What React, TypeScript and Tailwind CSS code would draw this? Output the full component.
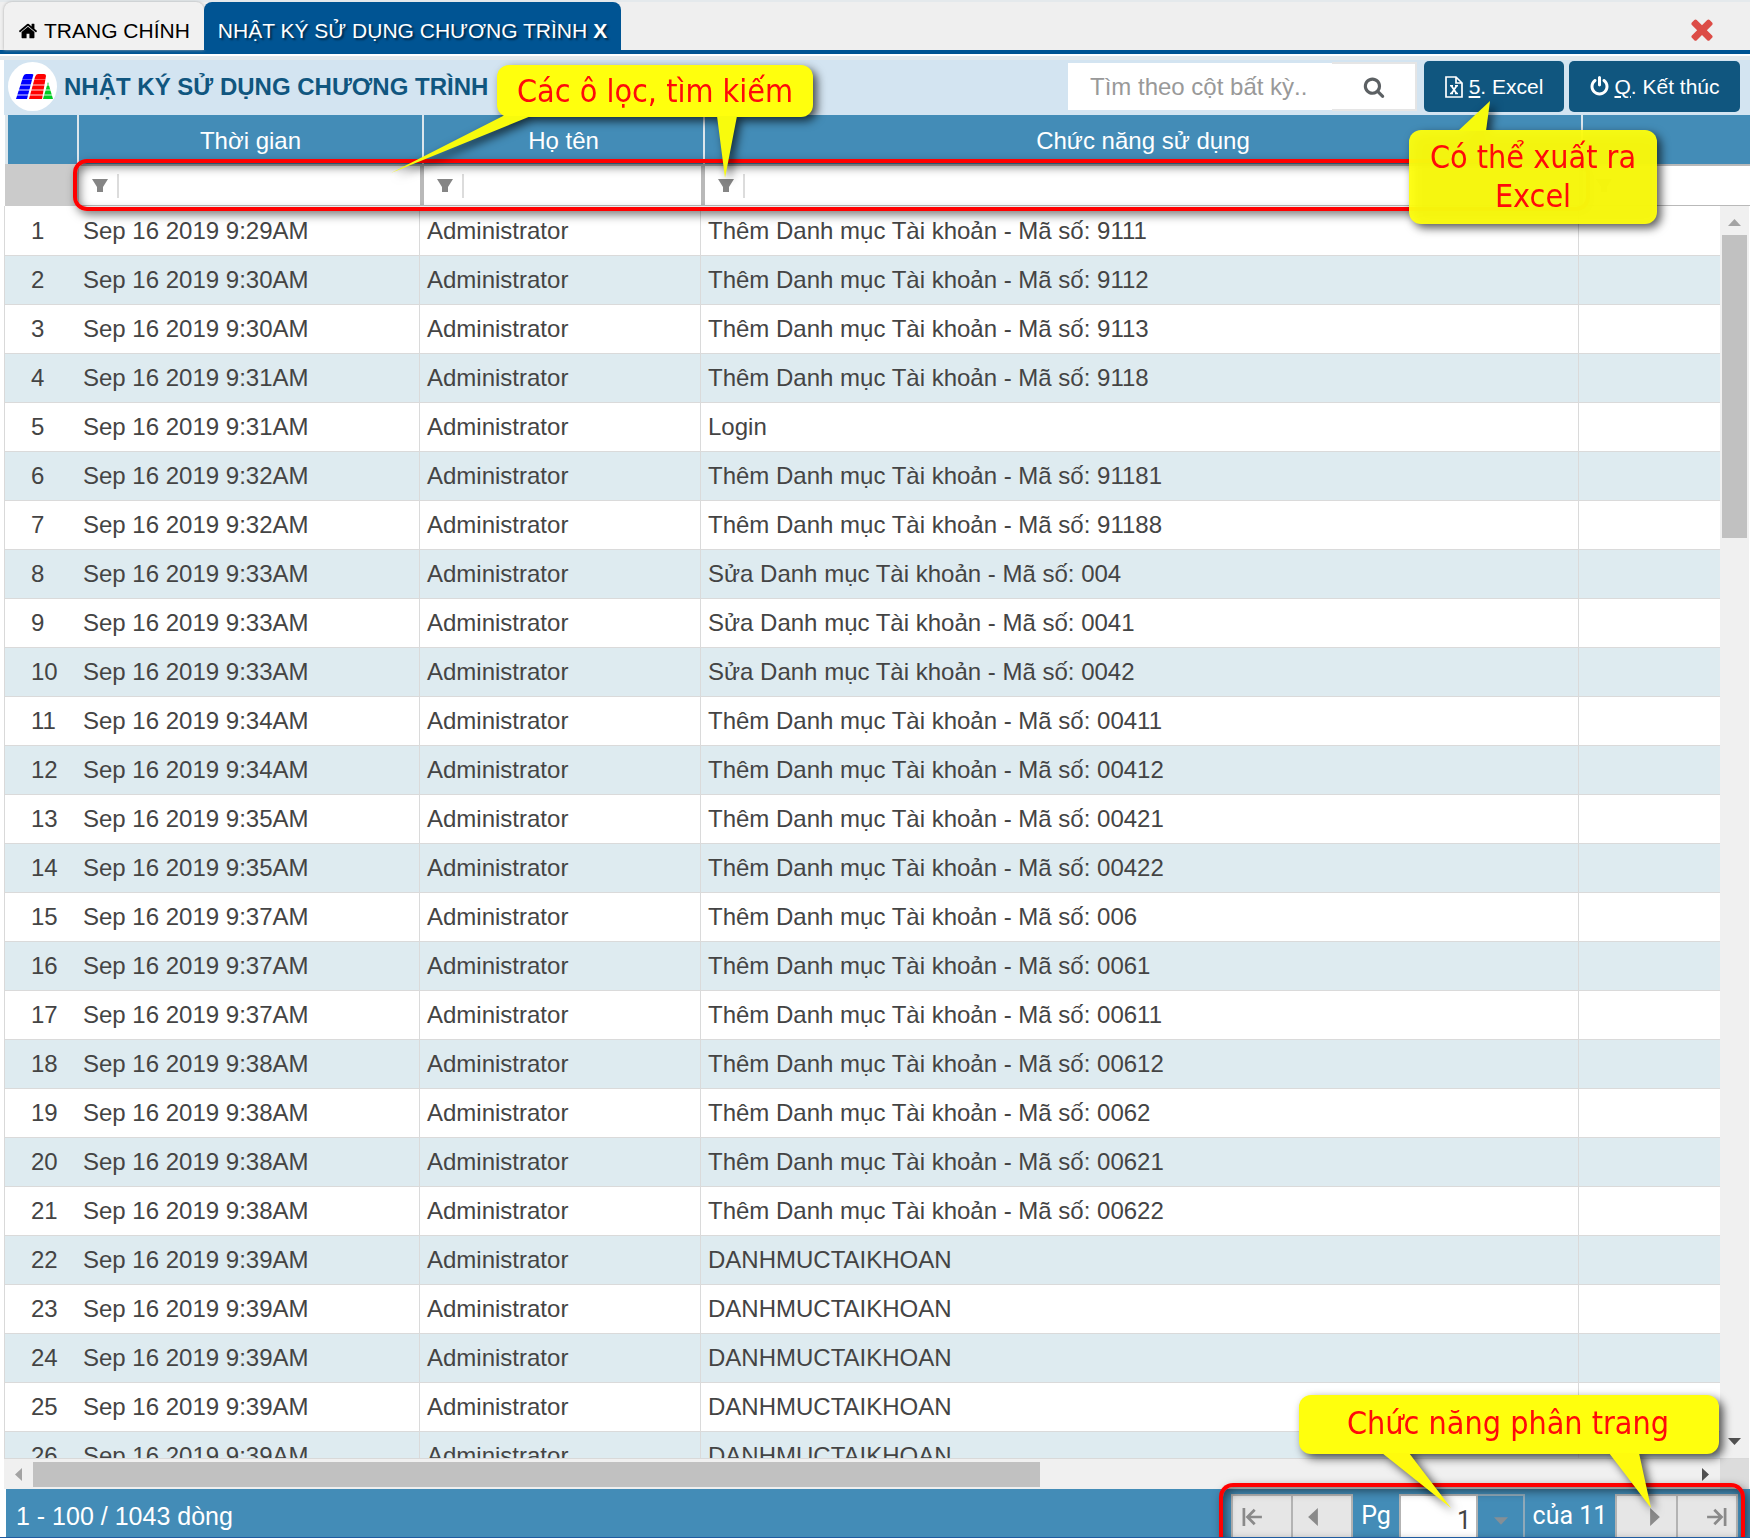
import { useState } from 'react';

type Log = {
    thoiGian: string;
    hoTen: string;
    chucNang: string;
};

const them = (ma: string) => `Thêm Danh mục Tài khoản - Mã số: ${ma}`;
const sua = (ma: string) => `Sửa Danh mục Tài khoản - Mã số: ${ma}`;

const entries: [string, string][] = [
    ['9:29AM', them('9111')],
    ['9:30AM', them('9112')],
    ['9:30AM', them('9113')],
    ['9:31AM', them('9118')],
    ['9:31AM', 'Login'],
    ['9:32AM', them('91181')],
    ['9:32AM', them('91188')],
    ['9:33AM', sua('004')],
    ['9:33AM', sua('0041')],
    ['9:33AM', sua('0042')],
    ['9:34AM', them('00411')],
    ['9:34AM', them('00412')],
    ['9:35AM', them('00421')],
    ['9:35AM', them('00422')],
    ['9:37AM', them('006')],
    ['9:37AM', them('0061')],
    ['9:37AM', them('00611')],
    ['9:38AM', them('00612')],
    ['9:38AM', them('0062')],
    ['9:38AM', them('00621')],
    ['9:38AM', them('00622')],
    ['9:39AM', 'DANHMUCTAIKHOAN'],
    ['9:39AM', 'DANHMUCTAIKHOAN'],
    ['9:39AM', 'DANHMUCTAIKHOAN'],
    ['9:39AM', 'DANHMUCTAIKHOAN'],
    ['9:39AM', 'DANHMUCTAIKHOAN'],
];

const logs: Log[] = entries.map(([gio, chucNang]) => ({
    thoiGian: `Sep 16 2019 ${gio}`,
    hoTen: 'Administrator',
    chucNang,
}));

const columns = ['Thời gian', 'Họ tên', 'Chức năng sử dụng', ''];

const icons = {
    home: 'M1472 992v480q0 26-19 45t-45 19h-384v-384h-256v384h-384q-26 0-45-19t-19-45v-480q0-1 .5-3t.5-3l575-474 575 474q1 2 1 6zm223-69l-62 74q-8 9-21 11h-3q-13 0-21-7l-692-577-692 577q-12 8-24 7-13-2-21-11l-62-74q-8-10-7-23.5t11-21.5l719-599q32-26 76-26t76 26l244 204v-195q0-14 9-23t23-9h192q14 0 23 9t9 23v408l219 182q10 8 11 21.5t-7 23.5z',
    times: 'M1490 1322q0 40-28 68l-136 136q-28 28-68 28t-68-28l-294-294-294 294q-28 28-68 28t-68-28l-136-136q-28-28-28-68t28-68l294-294-294-294q-28-28-28-68t28-68l136-136q28-28 68-28t68 28l294 294 294-294q28-28 68-28t68 28l136 136q28 28 28 68t-28 68l-294 294 294 294q28 28 28 68z',
    power: 'M1664 896q0 156-61 298t-164 245-245 164-298 61-298-61-245-164-164-245-61-298q0-182 80.5-343t226.5-270q43-32 95.5-25t83.5 50q32 42 24.5 94.5t-49.5 84.5q-98 74-151.5 181t-53.5 228q0 104 40.5 198.5t109.5 163.5 163.5 109.5 198.5 40.5 198.5-40.5 163.5-109.5 109.5-163.5 40.5-198.5q0-121-53.5-228t-151.5-181q-42-32-49.5-84.5t24.5-94.5q31-43 84-50t95 25q146 109 226.5 270t80.5 343zm-640-768v640q0 52-38 90t-90 38-90-38-38-90v-640q0-52 38-90t90-38 90 38 38 90z',
    search: 'M1216 832q0-185-131.5-316.5t-316.5-131.5-316.5 131.5-131.5 316.5 131.5 316.5 316.5 131.5 316.5-131.5 131.5-316.5zm512 832q0 52-38 90t-90 38q-54 0-90-38l-343-342q-179 124-399 124-143 0-273.5-55.5t-225-150-150-225-55.5-273.5 55.5-273.5 150-225 225-150 273.5-55.5 273.5 55.5 225 150 150 225 55.5 273.5q0 220-124 399l343 343q37 37 37 90z',
};

function Icon({ name, className }: { name: keyof typeof icons; className: string }) {
    return (
        <svg viewBox="0 0 1792 1792" fill="currentColor" className={className} aria-hidden="true">
            <path d={icons[name]} />
        </svg>
    );
}

function Logo() {
    return (
        <svg viewBox="0 0 49 49" className="h-[49px] w-[49px] shrink-0" aria-hidden="true">
            <circle cx="24.5" cy="24.5" r="24.5" fill="#fff" />
            <path d="M18 12h6q2 0 1 2l-6 23H8l7-22q1-3 3-3z" fill="#00f" />
            <path d="M30 12h6q2 0 2 2l-4 23H21l6-22q1-3 3-3z" fill="#f00" />
            <path d="M40 20l5 17H35z" fill="#0c2" />
            <path d="M14 17.500h28" stroke="#fff" strokeOpacity=".35" />
            <path d="M11 23h32M9 28h35M7 33h38" stroke="#fff" strokeOpacity=".85" strokeWidth="1.200" />
        </svg>
    );
}

function ExcelIcon() {
    return (
        <svg viewBox="0 0 18 22" className="h-[22px] w-[18px]" fill="none" stroke="currentColor" aria-hidden="true">
            <path d="M1 1h10l6 6v14H1zM11 1v6h6" strokeWidth="1.700" />
            <path d="M6.500 10l5 7.500M11.500 10l-5 7.500" strokeWidth="1.800" />
            <path d="M5 9.800h3M10 9.800h3M5 17.500h3M10 17.500h3" strokeWidth="1.400" />
        </svg>
    );
}

function FilterCell({ label }: { label: string }) {
    return (
        <div className="flex h-full items-center bg-white pl-[13px]">
            <svg viewBox="0 0 16 13" className="h-[13px] w-4 shrink-0" fill="#858585" aria-hidden="true">
                <path d="M0 0h16l-5 8v5H5V8z" />
            </svg>
            <input aria-label={`Lọc ${label}`} className="ml-[9px] h-6 w-full min-w-0 border-l-2 border-[#dcdcdc] bg-transparent px-2 text-2xl outline-none" />
        </div>
    );
}

const arrows = {
    up: 'M0 7L6.500 0 13 7z',
    down: 'M0 0h13L6.500 7z',
    left: 'M7 0v13L0 6.500z',
    right: 'M0 0v13L7 6.500z',
};

function Arrow({ dir, className }: { dir: keyof typeof arrows; className: string }) {
    const box = dir === 'up' || dir === 'down' ? '0 0 13 7' : '0 0 7 13';
    return (
        <svg viewBox={box} fill="currentColor" className={className} aria-hidden="true">
            <path d={arrows[dir]} />
        </svg>
    );
}

const balloonText = "font-['DejaVu_Sans_Condensed','DejaVu_Sans',sans-serif] text-[32px] text-[#ff0a0a]";

export default function App() {
    const [page, setPage] = useState('1');
    const [search, setSearch] = useState('');

    return (
        <div className="flex h-screen flex-col overflow-hidden border-b border-[#1f5ba0] bg-white font-['Liberation_Sans',Arial,sans-serif]">
            <nav className="flex h-[54px] shrink-0 items-end border-b-4 border-t-2 border-b-[#005493] border-t-[#e4e9ec] bg-[#efefef] pl-1">
                <a href="#home" className="flex h-full items-center gap-[6px] rounded-t-lg bg-[#f1f1f1] px-[14px] pt-[10px] text-[21px] leading-6 text-black shadow-[0_0_3px_#aaa]">
                    <Icon name="home" className="h-5 w-5" />
                    TRANG CHÍNH
                </a>
                <a href="#log" className="flex h-full items-center gap-[6px] rounded-t-lg bg-[#005493] px-[14px] pt-[10px] text-[21px] leading-6 text-white [text-shadow:2px_2px_2px_#00000080]">
                    NHẬT KÝ SỬ DỤNG CHƯƠNG TRÌNH
                    <b>X</b>
                </a>
                <button aria-label="Đóng" className="ml-auto mr-8 self-center pt-[6px] text-[#dc4c46]">
                    <Icon name="times" className="h-8 w-8" />
                </button>
            </nav>

            <div className="mt-[2px] flex min-h-0 flex-1 flex-col border-t-4 border-[#e4e9ec] pl-1">
                <header className="relative flex h-[55px] shrink-0 items-center bg-[#d3e4f1] pb-[2px] pl-1 pr-[10px]">
                    <Logo />
                    <h1 className="ml-[7px] text-2xl font-bold text-[#10567f]">NHẬT KÝ SỬ DỤNG CHƯƠNG TRÌNH</h1>

                    <div className="ml-auto flex h-[47px] items-center">
                        <input
                            aria-label="Tìm kiếm"
                            placeholder="Tìm theo cột bất kỳ.."
                            value={search}
                            onChange={(e) => setSearch(e.target.value)}
                            className="h-[47px] w-[264px] bg-white px-[22px] text-2xl text-[#555] outline-none placeholder:text-[#999]"
                        />
                        <button aria-label="Tìm" className="flex h-[49px] w-[85px] items-center justify-center border-y-2 border-r-2 border-[#e5e5e5] bg-white text-[#5c6063]">
                            <Icon name="search" className="h-[22px] w-[22px]" />
                        </button>
                    </div>

                    <div className="relative ml-[7px]">
                        <button className="flex h-[51px] w-[140px] items-center justify-center gap-[6px] rounded-[5px] bg-[#10567f] text-[21px] text-white">
                            <ExcelIcon />
                            <span><u>5</u>. Excel</span>
                        </button>
                        <div className={`absolute left-[-15px] top-[69px] z-30 w-[248px] rounded-xl bg-[#ffff0d]/95 px-3 py-2 text-center leading-[39px] drop-shadow-[4px_4px_5px_#000000b0] ${balloonText}`}>
                            <svg viewBox="0 0 90 30" className="absolute left-0 top-[-29px] h-[30px] w-[90px]" aria-hidden="true">
                                <path d="M49 30L81 0 77 30z" fill="#f6fb0d" />
                            </svg>
                            Có thể xuất ra Excel
                        </div>
                    </div>
                    <button className="ml-[5px] flex h-[51px] w-[171px] items-center justify-center gap-1 rounded-[5px] bg-[#10567f] text-[21px] text-white">
                        <Icon name="power" className="h-[21px] w-[21px]" />
                        <span><u>Q</u>. Kết thúc</span>
                    </button>

                    <div className={`absolute left-[493px] top-[5px] z-30 flex h-[52px] w-[316px] items-center justify-center rounded-xl bg-[#ffff0d] drop-shadow-[4px_4px_5px_#000000b0] ${balloonText}`}>
                        <svg viewBox="0 0 350 64" className="absolute left-[-106px] top-[51px] h-16 w-[350px]" aria-hidden="true">
                            <path d="M112 0h28L0 57zM326 0h20l-12 62z" fill="#f8fb0d" />
                        </svg>
                        Các ô lọc, tìm kiếm
                    </div>
                </header>

                <div className="relative shrink-0 pl-px">
                    <table className="w-full table-fixed border-separate border-spacing-0">
                        <colgroup>
                            <col className="w-[74px]" />
                            <col className="w-[345px]" />
                            <col className="w-[281px]" />
                            <col className="w-[878px]" />
                            <col />
                        </colgroup>
                        <thead>
                            <tr className="h-[49px] bg-[#438cb7] text-2xl text-white">
                                <th className="border-l-[3px] border-r-2 border-[#dce6ec]" />
                                {columns.map((c, i) => (
                                    <th key={i} className="border-[#dce6ec] p-0 pt-[2px] font-normal [&:not(:last-child)]:border-r-2">{c}</th>
                                ))}
                            </tr>
                            <tr className="h-[42px]">
                                <td className="bg-[#cbcbcb]" />
                                {columns.map((c, i) => (
                                    <td key={i} className="h-[42px] border-b border-t-2 border-[#b9b9b9] p-0 [&:not(:last-child)]:border-r-4">
                                        <FilterCell label={c} />
                                    </td>
                                ))}
                            </tr>
                        </thead>
                    </table>
                    <div className="pointer-events-none absolute left-[69px] top-[44px] z-20 h-[52px] w-[1517px] rounded-[14px] border-4 border-[#f00] shadow-[3px_4px_10px_#00000080,inset_3px_4px_10px_#00000080]" />
                </div>

                <div className="flex min-h-0 flex-1">
                    <div className="min-w-0 flex-1 overflow-hidden border-l border-[#d9d9d9] pt-px">
                        <table className="w-full table-fixed border-separate border-spacing-0 text-2xl text-[#444]">
                            <colgroup>
                                <col className="w-[74px]" />
                                <col className="w-[341px]" />
                                <col className="w-[281px]" />
                                <col className="w-[878px]" />
                                <col />
                            </colgroup>
                            <tbody>
                                {logs.map((log, i) => (
                                    <tr key={i} className="h-[49px] even:bg-[#deebf0]">
                                        <td className="border-b border-[#dadada] p-0 pl-[26px]">{i + 1}</td>
                                        <td className="border-b border-r border-[#dadada] p-0 pl-1">{log.thoiGian}</td>
                                        <td className="border-b border-r border-[#dadada] p-0 pl-[7px]">{log.hoTen}</td>
                                        <td className="border-b border-r border-[#dadada] p-0 pl-[7px]">{log.chucNang}</td>
                                        <td className="border-b border-[#dadada] p-0" />
                                    </tr>
                                ))}
                            </tbody>
                        </table>
                    </div>
                    <div className="mr-px flex w-[29px] shrink-0 flex-col items-center bg-[#f0f0f0]">
                        <div className="flex h-[29px] items-center pt-1">
                            <Arrow dir="up" className="h-[7px] w-[13px] text-[#a3a3a3]" />
                        </div>
                        <div className="min-h-0 w-[25px] flex-1">
                            <div className="h-[303px] bg-[#c1c1c1]" />
                        </div>
                        <div className="flex h-[29px] items-center pb-1">
                            <Arrow dir="down" className="h-[7px] w-[13px] text-[#505050]" />
                        </div>
                    </div>
                </div>

                <div className="mr-px flex h-[31px] shrink-0 items-center border-t border-[#d9d9d9] bg-[#f0f0f0]">
                    <div className="flex w-[29px] justify-center">
                        <Arrow dir="left" className="h-[13px] w-[7px] text-[#a3a3a3]" />
                    </div>
                    <div className="flex-1">
                        <div className="h-[25px] w-[1007px] bg-[#c1c1c1]" />
                    </div>
                    <div className="flex w-[29px] justify-center">
                        <Arrow dir="right" className="h-[13px] w-[7px] text-[#505050]" />
                    </div>
                    <div className="h-full w-[29px] bg-[#dcdcdc]" />
                </div>

                <footer className="relative ml-[2px] flex h-12 shrink-0 items-center justify-between bg-[#438cb7] pl-[10px] pr-3 text-[25px] text-white">
                    <span className="pt-2">1 - 100 / 1043 dòng</span>
                    <div className="flex h-[43px] self-end font-[Roboto,sans-serif]">
                        <button aria-label="Trang đầu" className="flex w-[62px] items-center border-2 border-b-0 border-[#b3b3b3] bg-[#e6e6e6] pl-2">
                            <svg viewBox="0 0 22 20" className="h-[18px] w-[22px]" fill="none" stroke="#8a8a8a" strokeWidth="3" aria-hidden="true">
                                <path d="M2 0v20M22 10H6M14 2L6 10l8 8" />
                            </svg>
                        </button>
                        <button aria-label="Trang trước" className="flex w-[60px] items-center border-r-2 border-t-2 border-[#b3b3b3] bg-[#e6e6e6] pl-[14px]">
                            <Arrow dir="left" className="h-[18px] w-[12px] text-[#8a8a8a]" />
                        </button>
                        <label htmlFor="page" className="w-[46px] text-center leading-[43px]">Pg</label>
                        <input
                            id="page"
                            value={page}
                            onChange={(e) => setPage(e.target.value)}
                            className="w-[79px] border-2 border-b-0 border-[#b3b3b3] bg-white pr-[5px] pt-2 text-right text-[#444] outline-none"
                        />
                        <button aria-label="Chọn trang" className="flex w-[47px] items-center justify-center border-r-2 border-t-2 border-[#8fa9b9] pt-2">
                            <Arrow dir="down" className="h-2 w-[14px] text-[#858f96]" />
                        </button>
                        <span className="w-[90px] text-center leading-[43px]">của 11</span>
                        <button aria-label="Trang sau" className="flex w-[61px] items-center border-l-2 border-t-2 border-[#b3b3b3] bg-[#e6e6e6] pl-8">
                            <Arrow dir="right" className="h-[18px] w-[12px] text-[#8a8a8a]" />
                        </button>
                        <button aria-label="Trang cuối" className="flex w-[62px] items-center justify-end border-2 border-b-0 border-[#b3b3b3] bg-[#e6e6e6] pr-2">
                            <svg viewBox="0 0 22 20" className="h-[18px] w-[22px]" fill="none" stroke="#8a8a8a" strokeWidth="3" aria-hidden="true">
                                <path d="M20 0v20M0 10h16M8 2l8 8-8 8" />
                            </svg>
                        </button>
                    </div>
                    <div className="pointer-events-none absolute bottom-0 right-[5px] z-20 h-[54px] w-[526px] rounded-t-[14px] border-4 border-b-0 border-[#f00] shadow-[3px_4px_10px_#00000080,inset_3px_4px_10px_#00000080]" />
                    <div className={`absolute bottom-[83px] right-[31px] z-30 flex h-[59px] w-[420px] items-center justify-center rounded-xl bg-[#ffff0d] pb-1 pr-[2px] drop-shadow-[4px_4px_5px_#000000b0] ${balloonText}`}>
                        <svg viewBox="0 0 420 56" className="absolute left-0 top-[58px] h-14 w-full" aria-hidden="true">
                            <path d="M83 0h27l42 55zM310 0h30l12 55z" fill="#fffb0d" />
                        </svg>
                        Chức năng phân trang
                    </div>
                </footer>
            </div>
        </div>
    );
}
